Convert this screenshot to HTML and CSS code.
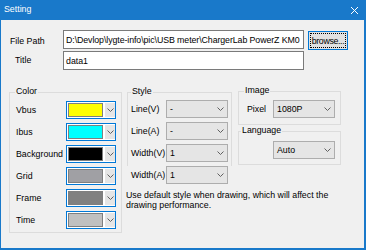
FILE: index.html
```html
<!DOCTYPE html>
<html>
<head>
<meta charset="utf-8">
<link rel="stylesheet" href="styles.css">
</head>
<body>
<div class="window">
  <div class="titlebar">
    <span class="title">Setting</span>
    <svg class="close" width="7" height="7" viewBox="0 0 7 7"><path d="M0 0L7 7M7 0L0 7" stroke="#fff" stroke-width="1"/></svg>
  </div>
  <div class="content">
    <div class="path-row">
      <span class="lbl lbl-path">File Path</span>
      <div class="field field-path">D:\Devlop\lygte-info\pic\USB meter\ChargerLab PowerZ KM0</div>
      <div class="btn"><span class="btn-focus">browse...</span></div>
    </div>
    <div class="title-row">
      <span class="lbl lbl-title">Title</span>
      <div class="field field-title">data1</div>
    </div>
    <div class="groups">
      <div class="group color-group">
        <span class="legend">Color</span>
        <div class="crow"><span class="clabel">Vbus</span><div class="swcombo"><span class="sw sw-yellow"></span><span class="drop"><svg class="chev" width="7" height="4" viewBox="0 0 7 4"><path d="M0.5 0.5L3.5 3.5L6.5 0.5" fill="none" stroke="#606060"/></svg></span></div></div>
        <div class="crow"><span class="clabel">Ibus</span><div class="swcombo"><span class="sw sw-cyan"></span><span class="drop"><svg class="chev" width="7" height="4" viewBox="0 0 7 4"><path d="M0.5 0.5L3.5 3.5L6.5 0.5" fill="none" stroke="#606060"/></svg></span></div></div>
        <div class="crow"><span class="clabel">Background</span><div class="swcombo"><span class="sw sw-black"></span><span class="drop"><svg class="chev" width="7" height="4" viewBox="0 0 7 4"><path d="M0.5 0.5L3.5 3.5L6.5 0.5" fill="none" stroke="#606060"/></svg></span></div></div>
        <div class="crow"><span class="clabel">Grid</span><div class="swcombo"><span class="sw sw-grid"></span><span class="drop"><svg class="chev" width="7" height="4" viewBox="0 0 7 4"><path d="M0.5 0.5L3.5 3.5L6.5 0.5" fill="none" stroke="#606060"/></svg></span></div></div>
        <div class="crow"><span class="clabel">Frame</span><div class="swcombo"><span class="sw sw-frame"></span><span class="drop"><svg class="chev" width="7" height="4" viewBox="0 0 7 4"><path d="M0.5 0.5L3.5 3.5L6.5 0.5" fill="none" stroke="#606060"/></svg></span></div></div>
        <div class="crow"><span class="clabel">Time</span><div class="swcombo"><span class="sw sw-time"></span><span class="drop"><svg class="chev" width="7" height="4" viewBox="0 0 7 4"><path d="M0.5 0.5L3.5 3.5L6.5 0.5" fill="none" stroke="#606060"/></svg></span></div></div>
      </div>
      <div class="style-col">
        <div class="group style-group">
          <span class="legend legend-style">Style</span>
          <div class="srow"><span class="slabel">Line(V)</span><div class="combo"><span>-</span><svg class="chev" width="7" height="4" viewBox="0 0 7 4"><path d="M0.5 0.5L3.5 3.5L6.5 0.5" fill="none" stroke="#606060"/></svg></div></div>
          <div class="srow"><span class="slabel">Line(A)</span><div class="combo"><span>-</span><svg class="chev" width="7" height="4" viewBox="0 0 7 4"><path d="M0.5 0.5L3.5 3.5L6.5 0.5" fill="none" stroke="#606060"/></svg></div></div>
          <div class="srow"><span class="slabel">Width(V)</span><div class="combo"><span>1</span><svg class="chev" width="7" height="4" viewBox="0 0 7 4"><path d="M0.5 0.5L3.5 3.5L6.5 0.5" fill="none" stroke="#606060"/></svg></div></div>
        </div>
        <div class="srow srow-out"><span class="slabel">Width(A)</span><div class="combo"><span>1</span><svg class="chev" width="7" height="4" viewBox="0 0 7 4"><path d="M0.5 0.5L3.5 3.5L6.5 0.5" fill="none" stroke="#606060"/></svg></div></div>
      </div>
      <div class="right-col">
        <div class="group img-group">
          <span class="legend">Image</span>
          <div class="srow"><span class="plabel">Pixel</span><div class="combo"><span>1080P</span><svg class="chev" width="7" height="4" viewBox="0 0 7 4"><path d="M0.5 0.5L3.5 3.5L6.5 0.5" fill="none" stroke="#606060"/></svg></div></div>
        </div>
        <div class="group lang-group">
          <span class="legend legend-lang">Language</span>
          <div class="combo"><span>Auto</span><svg class="chev" width="7" height="4" viewBox="0 0 7 4"><path d="M0.5 0.5L3.5 3.5L6.5 0.5" fill="none" stroke="#606060"/></svg></div>
        </div>
      </div>
      <p class="note">Use default style when drawing, which will affect the drawing performance.</p>
    </div>
  </div>
</div>
</body>
</html>
```
FILE: styles.css
```css
* { box-sizing: border-box; }
body {
  margin: 0;
  font-family: "Liberation Sans", Arial, sans-serif;
  font-size: 8.8px;
  line-height: 11px;
  color: #000;
  background: #fff;
}
.window {
  width: 366px;
  height: 250px;
  background: #f0f0f0;
  border: solid #1979ca;
  border-width: 0 2px 2px 1px;
}
.titlebar {
  height: 20px;
  background: #1979ca;
  color: #fff;
  display: flex;
  align-items: center;
  justify-content: space-between;
  padding: 0 6px 0 3px;
}
.title { margin-top: -1px; }
.close { display: block; }
.content { padding: 10px 0 0 8px; }
.path-row, .title-row { display: flex; align-items: flex-start; }
.title-row { margin-top: 1px; }
.lbl { width: 54px; }
.lbl-path { padding-left: 1px; margin-top: 6px; }
.lbl-title { padding-left: 6px; margin-top: 4px; }
.field {
  width: 241px;
  height: 19px;
  border: 1px solid #7a7a7a;
  background: #fff;
  padding: 4px 0 0 2px;
  white-space: nowrap;
  overflow: hidden;
}
.field-path { letter-spacing: -0.08px; }
.btn {
  width: 40px;
  height: 19px;
  margin: 1px 0 0 4px;
  border: 1px solid #0078d7;
  background: #e1e1e1;
  padding: 1px;
}
.btn-focus {
  display: block;
  height: 100%;
  border: 1px dotted #000;
  text-align: center;
  line-height: 14px;
  white-space: nowrap;
  letter-spacing: -0.35px;
}
.groups {
  display: grid;
  grid-template-columns: 113px 5px 105px 6px 103px;
  grid-template-rows: 92px auto;
  align-items: start;
  margin-top: 22px;
}
.group {
  position: relative;
  border: 1px solid #dcdcdc;
}
.legend {
  position: absolute;
  top: -7px;
  left: 5px;
  padding: 0 1px;
  background: #f0f0f0;
}
.legend-style { left: 3px; }
.legend-lang { left: 2px; }
.color-group {
  grid-column: 1;
  grid-row: 1 / span 2;
  height: 141px;
  padding: 8px 5px 0 6px;
  display: flex;
  flex-direction: column;
  gap: 4px;
}
.crow { display: flex; align-items: center; height: 18px; }
.clabel { width: 50px; }
.swcombo {
  width: 50px;
  height: 18px;
  border: 1px solid #0078d7;
  background: #fff;
  padding: 1px 0 1px 1px;
  display: flex;
  gap: 2px;
}
.sw { width: 35px; border: 1px solid #7f7f7f; }
.sw-yellow { background: #ffff00; }
.sw-cyan { background: #00ffff; }
.sw-black { background: #000000; }
.sw-grid { background: #a0a0a4; }
.sw-frame { background: #808080; }
.sw-time { background: #c0c0c0; }
.drop {
  width: 10px;
  background: #e5e5e5;
  display: flex;
  align-items: center;
  justify-content: center;
}
.chev { display: block; }
.style-col { grid-column: 3; grid-row: 1; }
.style-group {
  border-bottom: none;
  padding: 7px 3px 4px 3px;
  display: flex;
  flex-direction: column;
  gap: 4px;
}
.srow { display: flex; align-items: center; height: 18px; }
.srow-out { padding-left: 4px; }
.slabel { width: 35px; white-space: nowrap; }
.plabel { width: 26px; }
.combo {
  width: 62px;
  height: 18px;
  border: 1px solid #adadad;
  background: #e5e5e5;
  display: flex;
  align-items: center;
  justify-content: space-between;
  padding: 0 3px;
}
.right-col {
  grid-column: 5;
  grid-row: 1;
  margin-top: -1px;
  display: flex;
  flex-direction: column;
  gap: 6px;
}
.img-group { height: 34px; padding: 8px 0 0 8px; }
.lang-group { height: 34px; padding: 9px 0 0 34px; }
.note {
  grid-column: 3 / span 3;
  grid-row: 2;
  margin: 6px 0 0 -1px;
  line-height: 10.4px;
}
```
